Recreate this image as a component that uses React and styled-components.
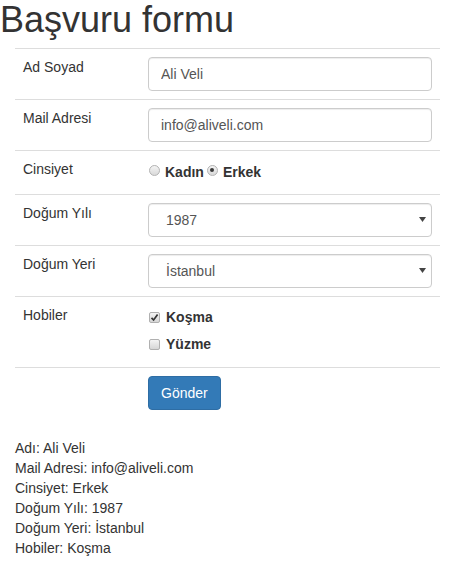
import React, { useState } from "react";
import styled, { createGlobalStyle } from "styled-components";

const GlobalStyle = createGlobalStyle`
    body {
        margin : 0;
        background : #fff;
        font-family : "Liberation Sans", Arial, sans-serif;
        font-size : 14px;
        line-height : 20px;
        color : #333;
    }
`

const Title = styled.h1`
    margin : 0 0 8px 0;
    font-size : 36px;
    font-weight : 500;
    line-height : 40px;
    color : #333;
`

const FormTable = styled.table`
    width : 425px;
    margin : 0 0 20px 15px;
    border-collapse : collapse;
    border-spacing : 0;
`

const Cell = styled.td`
    padding : 8px;
    vertical-align : top;
    border-top : ${props => props.$noBorder ? "0" : "1px solid #ddd"};
    width : ${props => props.$label ? "109px" : "284px"};
`

const TextInput = styled.input`
    display : block;
    box-sizing : border-box;
    width : 100%;
    height : 34px;
    margin : 0;
    padding : 6px 12px;
    font-family : inherit;
    font-size : 14px;
    color : #555;
    background : #fff;
    border : 1px solid #ccc;
    border-radius : 4px;
    box-shadow : inset 0 1px 1px rgba(0,0,0,.075);
    outline : none;
`

const SelectWrap = styled.div`
    position : relative;
`

const Select = styled.select`
    display : block;
    box-sizing : border-box;
    width : 100%;
    height : 34px;
    margin : 0;
    padding : 6px 24px 6px 17px;
    font-family : inherit;
    font-size : 14px;
    color : #555;
    background : #fff;
    border : 1px solid #ccc;
    border-radius : 4px;
    box-shadow : inset 0 1px 1px rgba(0,0,0,.075);
    appearance : none;
    -webkit-appearance : none;
    outline : none;
`

const Arrow = styled.svg`
    position : absolute;
    right : 6px;
    top : 14px;
    pointer-events : none;
`

const ChoiceLine = styled.div`
    display : flex;
    align-items : center;
    height : 20px;
    margin-top : ${props => props.$top || 0}px;
    margin-bottom : ${props => props.$bottom || 0}px;
`

const Choice = styled.label`
    display : inline-flex;
    align-items : center;
    height : 20px;
    font-weight : bold;
    color : #333;
    cursor : pointer;
    margin-left : ${props => props.$first ? "1px" : "3px"};
`

const RadioDot = styled.span`
    box-sizing : border-box;
    width : 11px;
    height : 11px;
    margin : 0 5px 4px 0;
    border-radius : 50%;
    border : 1px solid #b4b4b4;
    background : linear-gradient(#f4f4f4, #d9d9d9);
    display : flex;
    align-items : center;
    justify-content : center;

    &::after {
        content : "";
        width : 4px;
        height : 4px;
        border-radius : 50%;
        background : ${props => props.$checked ? "#3a3a3a" : "transparent"};
    }
`

const CheckBox = styled.span`
    box-sizing : border-box;
    width : 11px;
    height : 11px;
    margin : 0 6px 0 0;
    border-radius : 2px;
    border : 1px solid #b0b0b0;
    background : linear-gradient(#f4f4f4, #d6d6d6);
    display : flex;
    align-items : center;
    justify-content : center;
`

const SubmitButton = styled.button`
    display : block;
    height : 34px;
    padding : 6px 12px;
    font-family : inherit;
    font-size : 14px;
    line-height : 20px;
    color : #fff;
    background : #337ab7;
    border : 1px solid #2e6da4;
    border-radius : 4px;
    cursor : pointer;
`

const Summary = styled.div`
    margin-left : 15px;
    color : #333;
`

function App(){

    const [name,setName] = useState("Ali Veli")
    const [mail,setMail] = useState("info@aliveli.com")
    const [gender,setGender] = useState("Erkek")
    const [year,setYear] = useState("1987")
    const [city,setCity] = useState("İstanbul")
    const [hobbies,setHobbies] = useState({ "Koşma" : true, "Yüzme" : false })

    const toggleHobby = (h) => {
        setHobbies({ ...hobbies, [h] : !hobbies[h] })
    }

    const chosen = Object.keys(hobbies).filter(h => hobbies[h]).join(", ")

    return(
        <>
            <GlobalStyle />
            <Title>Başvuru formu</Title>
            <FormTable>
                <tbody>
                    <tr>
                        <Cell $label>Ad Soyad</Cell>
                        <Cell><TextInput value={name} onChange={e => setName(e.target.value)} /></Cell>
                    </tr>
                    <tr>
                        <Cell $label>Mail Adresi</Cell>
                        <Cell><TextInput value={mail} onChange={e => setMail(e.target.value)} /></Cell>
                    </tr>
                    <tr>
                        <Cell $label>Cinsiyet</Cell>
                        <Cell>
                            <ChoiceLine $top={3} $bottom={4}>
                                {["Kadın","Erkek"].map((g,i) => (
                                    <Choice key={g} $first={i === 0} onClick={() => setGender(g)}>
                                        <RadioDot $checked={gender === g} />
                                        {g}
                                    </Choice>
                                ))}
                            </ChoiceLine>
                        </Cell>
                    </tr>
                    <tr>
                        <Cell $label>Doğum Yılı</Cell>
                        <Cell>
                            <SelectWrap>
                                <Select value={year} onChange={e => setYear(e.target.value)}>
                                    {["1985","1986","1987","1988","1989","1990"].map(y => <option key={y}>{y}</option>)}
                                </Select>
                                <Arrow width="7" height="5" viewBox="0 0 7 5"><path d="M0 0H7L3.5 5Z" fill="#444" /></Arrow>
                            </SelectWrap>
                        </Cell>
                    </tr>
                    <tr>
                        <Cell $label>Doğum Yeri</Cell>
                        <Cell>
                            <SelectWrap>
                                <Select value={city} onChange={e => setCity(e.target.value)}>
                                    {["Ankara","İstanbul","İzmir"].map(c => <option key={c}>{c}</option>)}
                                </Select>
                                <Arrow width="7" height="5" viewBox="0 0 7 5"><path d="M0 0H7L3.5 5Z" fill="#444" /></Arrow>
                            </SelectWrap>
                        </Cell>
                    </tr>
                    <tr>
                        <Cell $label>Hobiler</Cell>
                        <Cell>
                            {Object.keys(hobbies).map((h,i) => (
                                <ChoiceLine key={h} $top={i === 0 ? 2 : 7} $bottom={i === 1 ? 5 : 0}>
                                    <Choice $first onClick={() => toggleHobby(h)}>
                                        <CheckBox>
                                            {hobbies[h] && (
                                                <svg width="9" height="9" viewBox="0 0 9 9">
                                                    <path d="M1.5 4.8L3.6 7L7.6 1.6" fill="none" stroke="#333" strokeWidth="1.7" />
                                                </svg>
                                            )}
                                        </CheckBox>
                                        {h}
                                    </Choice>
                                </ChoiceLine>
                            ))}
                        </Cell>
                    </tr>
                    <tr>
                        <Cell $label></Cell>
                        <Cell><SubmitButton type="button">Gönder</SubmitButton></Cell>
                    </tr>
                </tbody>
            </FormTable>
            <Summary>
                <div>Adı: {name}</div>
                <div>Mail Adresi: {mail}</div>
                <div>Cinsiyet: {gender}</div>
                <div>Doğum Yılı: {year}</div>
                <div>Doğum Yeri: {city}</div>
                <div>Hobiler: {chosen}</div>
            </Summary>
        </>
    )
}

export default App
